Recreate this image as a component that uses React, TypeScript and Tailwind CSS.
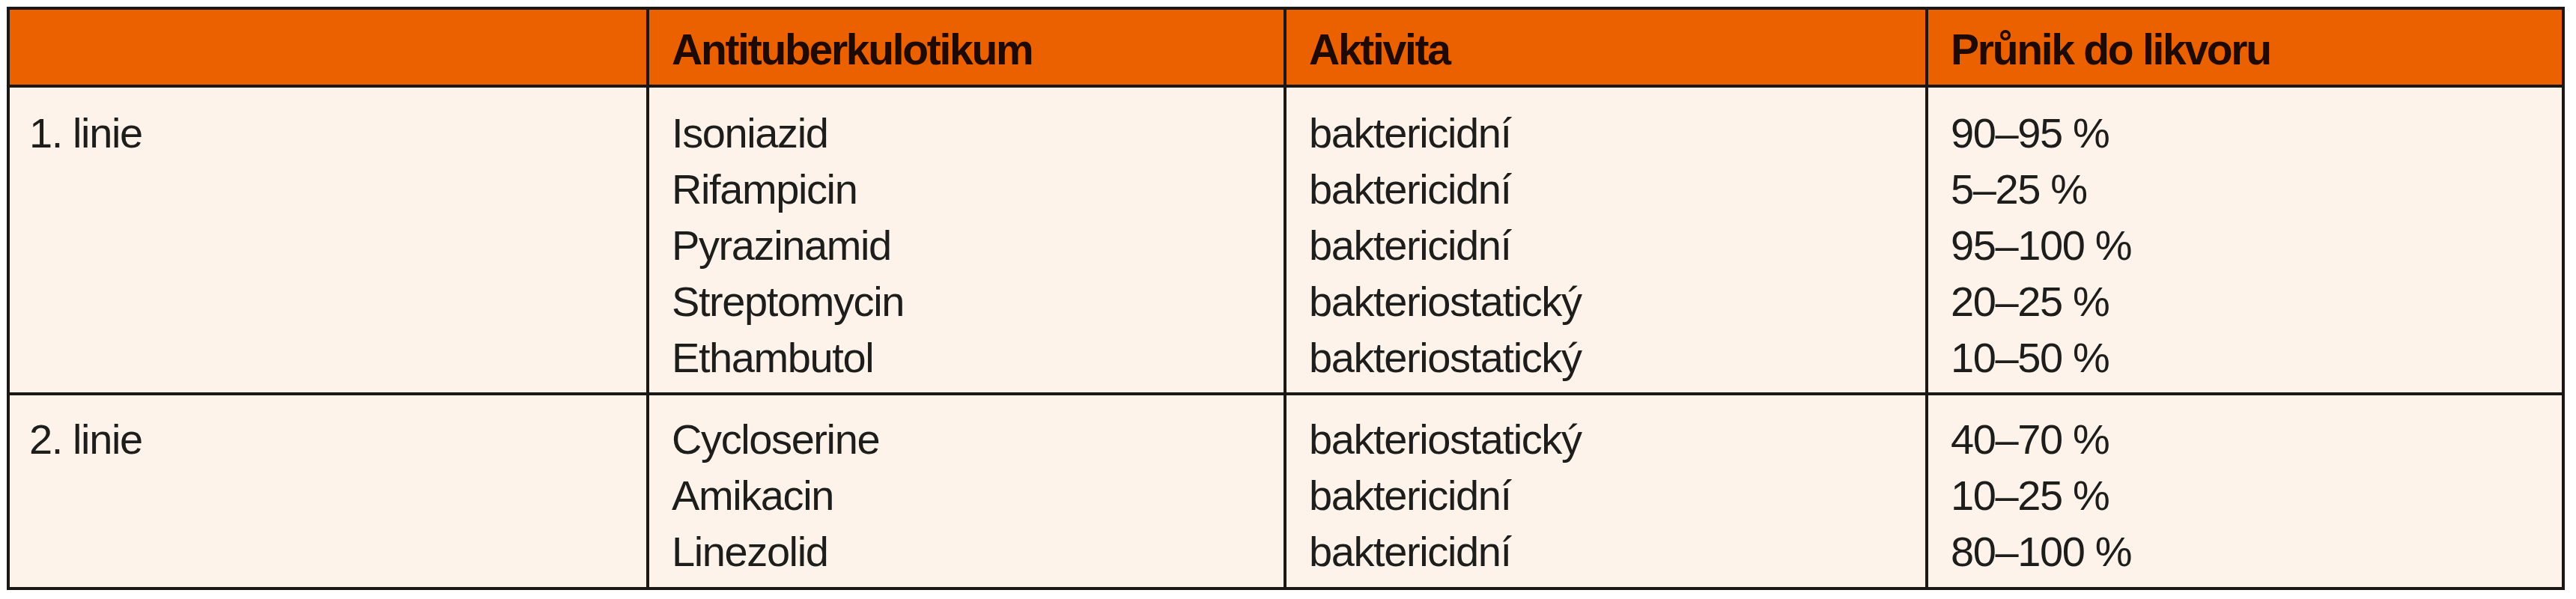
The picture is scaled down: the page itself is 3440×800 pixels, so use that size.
import React from 'react';

const headers = ['', 'Antituberkulotikum', 'Aktivita', 'Průnik do likvoru'];

const groups = [
  {
    label: '1. linie',
    box: 'h-[407px]',
    pad: 'pt-[23px]',
    rows: [
      ['Isoniazid', 'baktericidní', '90–95 %'],
      ['Rifampicin', 'baktericidní', '5–25 %'],
      ['Pyrazinamid', 'baktericidní', '95–100 %'],
      ['Streptomycin', 'bakteriostatický', '20–25 %'],
      ['Ethambutol', 'bakteriostatický', '10–50 %'],
    ],
  },
  {
    label: '2. linie',
    box: 'h-[260px] border-t-4 border-[#1b1714]',
    pad: 'pt-[21px]',
    rows: [
      ['Cycloserine', 'bakteriostatický', '40–70 %'],
      ['Amikacin', 'baktericidní', '10–25 %'],
      ['Linezolid', 'baktericidní', '80–100 %'],
    ],
  },
];

const cols = 'grid grid-cols-[850px_851px_857px_1fr]';
const bodyText = "text-[56px] leading-[75px] tracking-[-0.025em] text-[#1d1d1b] whitespace-nowrap";

export default function App() {
  return (
    <div className="w-[3440px] h-[800px] bg-white pt-[9px] pl-[9px] font-['Liberation_Sans',Arial,sans-serif]">
      <div className="w-[3416px] border-4 border-[#1b1714] bg-[#fef3ea]">
        {/* Header */}
        <div className={`${cols} h-[104px] bg-[#eb6100] border-b-4 border-[#1b1714]`}>
          {headers.map((h, i) => (
            <div
              key={i}
              className={`pt-[16px] pl-[30px] text-[57px] leading-[75px] font-bold tracking-[-0.04em] text-[#1e0a02] whitespace-nowrap ${
                i > 0 ? 'border-l-4 border-[#1b1714]' : ''
              }`}
            >
              {h}
            </div>
          ))}
        </div>

        {/* Body */}
        {groups.map((g) => (
          <div key={g.label} className={`${cols} ${g.box}`}>
            <div className={`${g.pad} pl-[26px] ${bodyText}`}>{g.label}</div>
            {[0, 1, 2].map((c) => (
              <div key={c} className={`${g.pad} pl-[30px] border-l-4 border-[#1b1714] ${bodyText}`}>
                {g.rows.map((r) => (
                  <div key={r[0]}>{r[c]}</div>
                ))}
              </div>
            ))}
          </div>
        ))}
      </div>
    </div>
  );
}
